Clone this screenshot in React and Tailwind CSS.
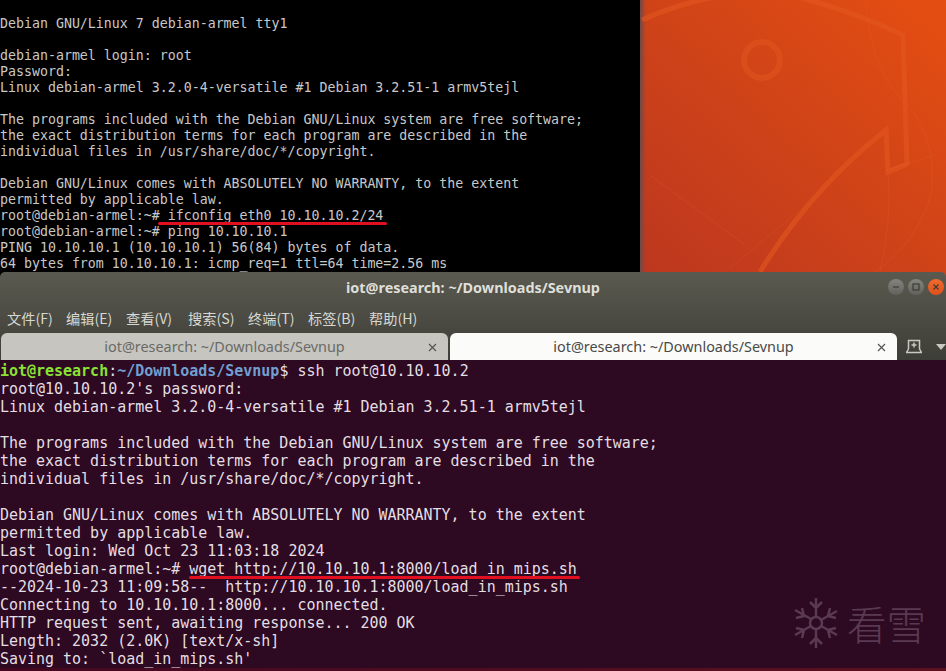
const topLines = [
  'Debian GNU/Linux 7 debian-armel tty1',
  '',
  'debian-armel login: root',
  'Password:',
  'Linux debian-armel 3.2.0-4-versatile #1 Debian 3.2.51-1 armv5tejl',
  '',
  'The programs included with the Debian GNU/Linux system are free software;',
  'the exact distribution terms for each program are described in the',
  'individual files in /usr/share/doc/*/copyright.',
  '',
  'Debian GNU/Linux comes with ABSOLUTELY NO WARRANTY, to the extent',
  'permitted by applicable law.',
  'root@debian-armel:~# ifconfig eth0 10.10.10.2/24',
  'root@debian-armel:~# ping 10.10.10.1',
  'PING 10.10.10.1 (10.10.10.1) 56(84) bytes of data.',
  '64 bytes from 10.10.10.1: icmp_req=1 ttl=64 time=2.56 ms',
]

const bottomLines = [
  "root@10.10.10.2's password:",
  'Linux debian-armel 3.2.0-4-versatile #1 Debian 3.2.51-1 armv5tejl',
  '',
  'The programs included with the Debian GNU/Linux system are free software;',
  'the exact distribution terms for each program are described in the',
  'individual files in /usr/share/doc/*/copyright.',
  '',
  'Debian GNU/Linux comes with ABSOLUTELY NO WARRANTY, to the extent',
  'permitted by applicable law.',
  'Last login: Wed Oct 23 11:03:18 2024',
  'root@debian-armel:~# wget http://10.10.10.1:8000/load_in_mips.sh',
  '--2024-10-23 11:09:58--  http://10.10.10.1:8000/load_in_mips.sh',
  'Connecting to 10.10.10.1:8000... connected.',
  'HTTP request sent, awaiting response... 200 OK',
  'Length: 2032 (2.0K) [text/x-sh]',
  "Saving to: `load_in_mips.sh'",
]

const menus = [
  ['文件(F)', 'w-[59px]'],
  ['编辑(E)', 'w-[60px]'],
  ['查看(V)', 'w-[62px]'],
  ['搜索(S)', 'w-[60px]'],
  ['终端(T)', 'w-[60px]'],
  ['标签(B)', 'w-[61px]'],
  ['帮助(H)', 'w-[60px]'],
]

function Wallpaper() {
  return (
    <div className="relative flex-1 bg-gradient-to-bl from-[#e54e10] via-[#cf4318] to-[#bc371f]">
      <div className="absolute inset-y-0 left-0 w-[6px] bg-gradient-to-r from-[#6e4a48] to-transparent" />
      <svg className="absolute inset-0" width="306" height="278" fill="none">
        <path d="M2 20Q40 3 80-4M162-2Q215 12 263 35L267 164 248 172 246 130Q170 190 120 272" stroke="#e2561f" strokeOpacity="0.6" strokeWidth="5" />
        <circle cx="122" cy="60" r="18" stroke="#e0561f" strokeOpacity="0.55" strokeWidth="6" />
        <path d="M225 0Q232 70 262 100 296 130 292 190 280 240 235 272M248 172Q252 220 240 272M10 175 105 245M90 268 160 210M246 170 295 155" stroke="#e8693a" strokeOpacity="0.2" />
      </svg>
    </div>
  )
}

function TabClose() {
  return (
    <svg width="9" height="9" viewBox="0 0 9 9" stroke="#555" strokeWidth="1.2">
      <path d="M1 1l7 7M8 1L1 8" />
    </svg>
  )
}

function Tab({ active }) {
  return (
    <div className={`relative flex h-[27px] w-[447px] items-center justify-center rounded-t-[6px] text-[14.4px] ${active ? 'bg-[#fbfbfa] text-[#4a4a46]' : 'bg-[#c6c5c0] text-[#6a6a66]'}`}>
      iot@research: ~/Downloads/Sevnup
      <span className="absolute right-[11px] top-[10px] flex">
        <TabClose />
      </span>
    </div>
  )
}

function WinButton({ className, children }) {
  return (
    <div className={`flex h-4 w-4 items-center justify-center rounded-full ${className}`}>
      <svg width="10" height="10" viewBox="0 0 10 10" fill="none" stroke="#3d3d38" strokeWidth="1.2">
        {children}
      </svg>
    </div>
  )
}

export default function App() {
  return (
    <div className="h-[671px] w-[946px] overflow-hidden bg-black">
      {/* desktop runs a little under the window so its rounded corners show it */}
      <div className="flex h-[278px]">
        <div className="relative w-[640px] bg-black pt-[16px] font-['DejaVu_Sans_Mono',monospace] text-[13.28px] leading-[16px] text-[#c8c8c8]">
          {topLines.map((line, i) => (
            <div key={i} className="h-4 whitespace-pre">{line}</div>
          ))}
          <div className="absolute left-[158px] top-[222px] h-[3px] w-[229px] rounded-full bg-[#e01020]" />
        </div>
        <Wallpaper />
      </div>

      <div className="relative -mt-[6px] flex h-[399px] flex-col">
        <div className="rounded-t-[5px] bg-gradient-to-b from-[#5a5a50] to-[#3e3e38] font-['Noto_Sans',sans-serif]">
          <div className="relative flex h-[32px] items-center justify-center text-[14.4px] font-bold text-[#dfdfd9]">
            iot@research: ~/Downloads/Sevnup
            <div className="absolute right-[2px] top-[7px] flex gap-1">
              <WinButton className="bg-gradient-to-b from-[#85857f] to-[#62625c]">
                <path d="M2 5h6" />
              </WinButton>
              <WinButton className="bg-gradient-to-b from-[#85857f] to-[#62625c]">
                <rect x="2" y="2" width="6" height="6" />
              </WinButton>
              <WinButton className="bg-gradient-to-b from-[#f06a2c] to-[#e0501c]">
                <path d="M2.500 2.500l5 5M7.500 2.500l-5 5" />
              </WinButton>
            </div>
          </div>
          <div className="flex h-[29px] items-center pl-[7px] font-['Noto_Sans_CJK_SC',sans-serif] text-[14.2px] text-[#d8d8d2]">
            {menus.map(([label, width]) => (
              <span key={label} className={width}>{label}</span>
            ))}
          </div>
          <div className="flex h-[27px] items-stretch gap-[2px] pl-[1px]">
            <Tab />
            <Tab active />
            <div className="flex flex-1 items-center justify-between pl-[6px]">
              <svg width="18" height="15" viewBox="0 0 18 15" fill="none" stroke="#c9c9c3" strokeWidth="1.5">
                <path d="M3.500 10V1.500h11V10M1.500 13.500l2-3.500M16.500 13.500l-2-3.500M1 13.500h16M9 3.500v5M6.500 6h5" />
              </svg>
              <span className="h-0 w-0 border-x-[5px] border-t-[6px] border-x-transparent border-t-[#c9c9c3]" />
            </div>
          </div>
        </div>

        <div className="relative flex-1 bg-[#2d0922] pt-[2px] font-['DejaVu_Sans_Mono',monospace] text-[14.97px] leading-[18px] text-[#e4dfe2]">
          <div className="h-[18px] whitespace-pre">
            <span className="font-bold text-[#8ae234]">iot@research</span>
            :
            <span className="font-bold text-[#729fcf]">~/Downloads/Sevnup</span>
            $ ssh root@10.10.10.2
          </div>
          {bottomLines.map((line, i) => (
            <div key={i} className="h-[18px] whitespace-pre">{line}</div>
          ))}
          <div className="absolute left-[189px] top-[216px] h-[3px] w-[391px] rounded-full bg-[#e01020]" />
          <div className="absolute inset-x-0 bottom-0 h-[3px] bg-gradient-to-r from-[#42081f] to-[#5c1020]" />
          <div className="absolute left-[793px] top-[237px] flex items-center gap-[8px] text-[#5a3a52]">
            <svg width="46" height="52" viewBox="0 0 46 52" fill="none" stroke="currentColor" strokeWidth="2.500">
              <path d="M23 1v18M23 33v18M2 13l16 9M28 29l16 9M2 38l16-9M28 23l16-9M17 5l6 6 6-6M17 47l6-6 6 6M3 21l8-2-2-8M43 31l-8 2 2 8M3 31l8 2-2 8M43 21l-8-2 2-8" />
              <circle cx="23" cy="26" r="6" />
            </svg>
            <span className="font-['Noto_Sans_CJK_SC',sans-serif] text-[39.500px] font-light leading-none">看雪</span>
          </div>
        </div>
      </div>
    </div>
  )
}
